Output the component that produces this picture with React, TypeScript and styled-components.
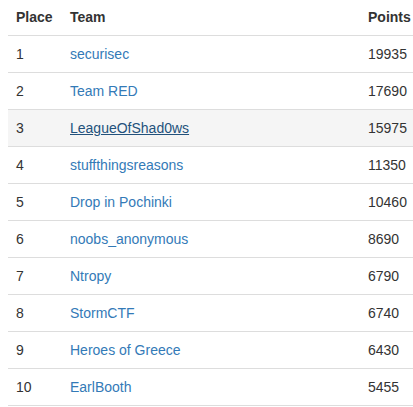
import React from "react";
import styled, { createGlobalStyle } from "styled-components";

const GlobalStyle = createGlobalStyle`
  html, body {
    margin: 0;
    padding: 0;
    background: #fff;
    overflow: hidden;
  }
  body {
    font-family: "Liberation Sans", Arial, Helvetica, sans-serif;
    font-size: 14px;
    line-height: 20px;
    color: #333;
  }
`;

const Wrapper = styled.div`
  padding-left: 8px;
`;

const Table = styled.table`
  width: 420px;
  border-collapse: separate;
  border-spacing: 0;
  table-layout: fixed;
`;

const HeadCell = styled.th<{ $w?: number }>`
  text-align: left;
  font-weight: bold;
  padding: 7px 8px 8px;
  border-bottom: 1px solid #ddd;
  width: ${(p) => (p.$w ? `${p.$w}px` : "auto")};
`;

const Row = styled.tr<{ $hover?: boolean }>`
  background: ${(p) => (p.$hover ? "#f5f5f5" : "transparent")};
`;

const Cell = styled.td`
  padding: 8px;
  border-bottom: 1px solid #ddd;
  vertical-align: top;
  white-space: nowrap;
`;

const TeamLink = styled.a<{ $hover?: boolean }>`
  color: ${(p) => (p.$hover ? "#23527c" : "#337ab7")};
  text-decoration: ${(p) => (p.$hover ? "underline" : "none")};
  cursor: pointer;
`;

const rows: [number, string, number][] = [
  [1, "securisec", 19935],
  [2, "Team RED", 17690],
  [3, "LeagueOfShad0ws", 15975],
  [4, "stuffthingsreasons", 11350],
  [5, "Drop in Pochinki", 10460],
  [6, "noobs_anonymous", 8690],
  [7, "Ntropy", 6790],
  [8, "StormCTF", 6740],
  [9, "Heroes of Greece", 6430],
  [10, "EarlBooth", 5455],
];

export default function App() {
  return (
    <>
      <GlobalStyle />
      <Wrapper>
        <Table>
          <thead>
            <tr>
              <HeadCell $w={38}>Place</HeadCell>
              <HeadCell $w={282}>Team</HeadCell>
              <HeadCell>Points</HeadCell>
            </tr>
          </thead>
          <tbody>
            {rows.map(([place, team, points]) => {
              const hover = place === 3;
              return (
                <Row key={place} $hover={hover}>
                  <Cell>{place}</Cell>
                  <Cell>
                    <TeamLink $hover={hover}>{team}</TeamLink>
                  </Cell>
                  <Cell>{points}</Cell>
                </Row>
              );
            })}
          </tbody>
        </Table>
      </Wrapper>
    </>
  );
}
